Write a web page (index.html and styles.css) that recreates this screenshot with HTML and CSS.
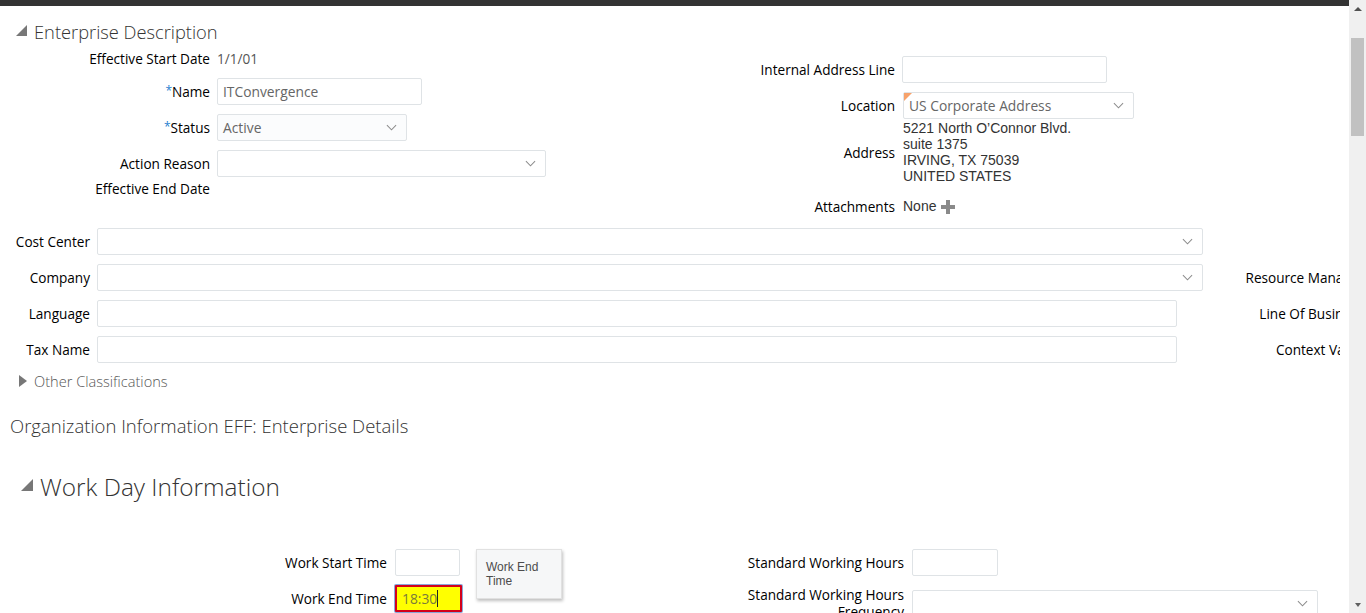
FILE: index.html
```html
<!DOCTYPE html>
<html>
<head>
<meta charset="utf-8">
<link rel="stylesheet" href="styles.css">
</head>
<body>
<div class="page">
  <div class="topbar"></div>
  <div class="content">
    <div class="sec-head">
      <span class="tri-down"></span><span class="sec-title">Enterprise Description</span>
    </div>
    <div class="top-cols">
      <div class="col-left">
        <div class="frow r-esd"><div class="lbl">Effective Start Date</div><div class="val">1/1/01</div></div>
        <div class="frow r-name"><div class="lbl"><span class="req">*</span>Name</div><div class="inp w-name"><span class="itext">ITConvergence</span></div></div>
        <div class="frow r-status"><div class="lbl"><span class="req">*</span>Status</div><div class="inp sel w-status shaded"><span class="itext">Active</span><svg class="chev" viewBox="0 0 12 7"><polyline points="1,1 6,6 11,1"/></svg></div></div>
        <div class="frow r-reason"><div class="lbl">Action Reason</div><div class="inp sel w-reason"><span class="itext"></span><svg class="chev" viewBox="0 0 12 7"><polyline points="1,1 6,6 11,1"/></svg></div></div>
        <div class="frow r-eed"><div class="lbl">Effective End Date</div></div>
      </div>
      <div class="col-right">
        <div class="frow r-ial"><div class="lbl">Internal Address Line</div><div class="inp w-ial"></div></div>
        <div class="frow r-loc"><div class="lbl">Location</div><div class="inp sel w-loc"><span class="flag"></span><span class="itext">US Corporate Address</span><svg class="chev" viewBox="0 0 12 7"><polyline points="1,1 6,6 11,1"/></svg></div></div>
        <div class="frow r-addr"><div class="lbl">Address</div>
          <div class="addr">5221 North O’Connor Blvd.<br>suite 1375<br>IRVING, TX 75039<br>UNITED STATES</div>
        </div>
        <div class="frow r-att"><div class="lbl">Attachments</div><div class="val dark">None</div>
          <svg class="plus" viewBox="0 0 14 14"><rect x="5" y="0" width="4" height="14"/><rect x="0" y="5" width="14" height="4"/></svg>
        </div>
      </div>
    </div>

    <div class="wide">
      <div class="wrow"><div class="lbl wl">Cost Center</div><div class="inp sel w-long"><span class="itext"></span><svg class="chev" viewBox="0 0 12 7"><polyline points="1,1 6,6 11,1"/></svg></div><div class="rside"><div class="rlbl"></div></div></div>
      <div class="wrow"><div class="lbl wl">Company</div><div class="inp sel w-long"><span class="itext"></span><svg class="chev" viewBox="0 0 12 7"><polyline points="1,1 6,6 11,1"/></svg></div><div class="rside"><div class="rlbl">Resource Manager</div></div></div>
      <div class="wrow"><div class="lbl wl">Language</div><div class="inp w-med"></div><div class="rside"><div class="rlbl">Line Of Business</div></div></div>
      <div class="wrow"><div class="lbl wl">Tax Name</div><div class="inp w-med"></div><div class="rside"><div class="rlbl">Context Value</div></div></div>
    </div>

    <div class="other"><span class="tri-right"></span><span class="other-t">Other Classifications</span></div>

    <div class="org-title">Organization Information EFF: Enterprise Details</div>

    <div class="wd-head"><span class="tri-down big"></span><span class="wd-title">Work Day Information</span></div>

    <div class="wd-cols">
      <div class="wd-left">
        <div class="frow r-wst"><div class="lbl">Work Start Time</div><div class="inp w-time"></div></div>
        <div class="frow r-wet"><div class="lbl">Work End Time</div><div class="inp w-time2 err"><span class="itext errt">18:30</span><span class="caret"></span></div></div>
      </div>
      <div class="tip-wrap">
        <div class="tip">Work End<br>Time</div>
      </div>
      <div class="wd-right">
        <div class="frow r-swh"><div class="lbl">Standard Working Hours</div><div class="inp w-swh"></div></div>
        <div class="frow r-swhf"><div class="lbl">Standard Working Hours<br>Frequency</div><div class="inp sel w-swhf"><span class="itext"></span><svg class="chev" viewBox="0 0 12 7"><polyline points="1,1 6,6 11,1"/></svg></div></div>
      </div>
    </div>
  </div>
</div>
<div class="sbar">
  <div class="sb-up"></div>
  <div class="sb-thumb"></div>
  <div class="sb-fill"></div>
  <div class="sb-down"></div>
</div>
</body>
</html>
```
FILE: styles.css
```css
html, body {
  margin: 0;
  padding: 0;
  height: 613px;
  overflow: hidden;
  background: #fff;
}
body {
  display: flex;
  font-family: "Open Sans", "Noto Sans", sans-serif;
  font-size: 13.6px;
  color: #000;
}
.page {
  width: 1349px;
  height: 613px;
  overflow: hidden;
  display: flex;
  flex-direction: column;
}
.topbar {
  height: 6px;
  background: #333;
  flex: none;
}
.content {
  width: 1340px;
  overflow: hidden;
}
.sec-head {
  height: 28px;
  padding-top: 11px;
  display: flex;
  align-items: center;
  padding-left: 16px;
}
.tri-down {
  width: 0;
  height: 0;
  border-left: 11px solid transparent;
  border-bottom: 11px solid #777;
  margin-right: 7px;
  margin-top: -2px;
}
.tri-down.big {
  border-left-width: 12px;
  border-bottom-width: 12px;
  margin-right: 7px;
}
.sec-title {
  font-family: "Open Sans", sans-serif;
  font-weight: 300;
  font-size: 18.3px;
  color: #333;
}
.top-cols {
  display: flex;
  margin-top: 1px;
}
.col-left {
  width: 740px;
  display: flex;
  flex-direction: column;
}
.col-right {
  display: flex;
  flex-direction: column;
}
.frow {
  display: flex;
  align-items: center;
}
.lbl {
  text-align: right;
  white-space: nowrap;
  flex: none;
}
.col-left .lbl { width: 210px; margin-right: 7px; }
.col-right .lbl { width: 155px; margin-right: 7px; }
.req { color: #1f7fcf; vertical-align: 2px; font-size: 12px; }
.val { color: #555; }
.val.dark { color: #333; font-family: "Liberation Sans", Arial, sans-serif; font-size: 14px; }
.r-esd { height: 24px; margin-top: 0; }
.r-name { height: 27px; margin-top: 8px; }
.r-status { height: 27px; margin-top: 9px; }
.r-reason { height: 27px; margin-top: 9px; }
.r-eed { height: 20px; margin-top: 1px; }

.r-ial { height: 27px; margin-top: 10px; }
.r-loc { height: 27px; margin-top: 9px; }
.r-loc .lbl { margin-right: 8px; }
.r-addr { height: 64px; margin-top: 1px; }
.r-addr .lbl { margin-right: 8px; }
.r-att { height: 20px; margin-top: 12px; }
.r-att .lbl { margin-right: 8px; }

.inp {
  box-sizing: border-box;
  height: 27px;
  border: 1px solid #dfe3e6;
  border-radius: 2px;
  background: #fff;
  display: flex;
  align-items: center;
  position: relative;
  flex: none;
}
.inp.shaded { background: #fbfcfd; }
.itext {
  padding-left: 5px;
  color: #666;
  font-size: 13.8px;
  flex: 1;
}
.sel .chev {
  width: 11px;
  height: 7px;
  margin-right: 9px;
  fill: none;
  stroke: #8c8c8c;
  stroke-width: 1.1;
}
.w-name { width: 205px; }
.w-status { width: 190px; }
.w-reason { width: 329px; }
.w-ial { width: 205px; }
.w-loc { width: 231px; }
.flag {
  position: absolute;
  left: 0;
  top: 0;
  width: 0;
  height: 0;
  border-top: 8px solid #f7a26b;
  border-right: 8px solid transparent;
}
.addr {
  font-family: "Liberation Sans", Arial, sans-serif;
  font-size: 14px;
  line-height: 16px;
  color: #333;
}
.plus {
  width: 14px;
  height: 14px;
  fill: #8a8a8a;
  margin-left: 5px;
  margin-top: 1px;
}

.wide {
  margin-top: 12px;
  display: flex;
  flex-direction: column;
  gap: 9px;
}
.wrow {
  display: flex;
  align-items: center;
  height: 27px;
}
.wl { width: 90px; margin-right: 7px; }
.w-long { width: 1106px; }
.w-med { width: 1080px; }
.rside {
  flex: 1;
  overflow: hidden;
  min-width: 0;
}
.rlbl {
  margin-right: -24px;
  text-align: right;
  white-space: nowrap;
}

.other {
  height: 20px;
  margin-top: 8px;
  display: flex;
  align-items: center;
  padding-left: 19px;
}
.tri-right {
  width: 0;
  height: 0;
  border-top: 6px solid transparent;
  border-bottom: 6px solid transparent;
  border-left: 8px solid #777;
  margin-right: 7px;
}
.other-t {
  font-weight: 300;
  font-size: 14.6px;
  color: #555;
}
.org-title {
  margin-top: 23px;
  padding-left: 10px;
  font-weight: 300;
  font-size: 18.5px;
  color: #333;
  height: 24px;
  line-height: 24px;
}
.wd-head {
  margin-top: 30px;
  height: 36px;
  display: flex;
  align-items: center;
  padding-left: 21px;
}
.wd-title {
  font-weight: 300;
  font-size: 24.4px;
  color: #333;
}
.wd-cols {
  margin-top: 45px;
  display: flex;
}
.wd-left {
  display: flex;
  flex-direction: column;
  gap: 9px;
  width: 476px;
}
.wd-left .lbl { width: 387px; margin-right: 8px; }
.r-wst, .r-wet { height: 27px; }
.w-time { width: 65px; }
.w-time2 { width: 67px; }
.err {
  background: #ffff00;
  border: 2px solid #d3001b;
  box-shadow: 0 0 0 1px #8aa6d8;
  border-radius: 1px;
}
.errt { color: #7a7a3c; padding-left: 5px; flex: none; }
.caret {
  width: 1px;
  height: 17px;
  background: #222;
  margin-left: 0;
}
.tip-wrap {
  width: 270px;
  flex: none;
}
.tip {
  box-sizing: border-box;
  width: 86px;
  height: 50px;
  background: #f6f7f8;
  border: 1px solid #e1e1e1;
  box-shadow: 1px 2px 3px rgba(0,0,0,0.25);
  font-family: "Liberation Sans", Arial, sans-serif;
  font-size: 12px;
  line-height: 14px;
  color: #4c4c4c;
  padding: 10px 0 0 9px;
}
.wd-right {
  display: flex;
  flex-direction: column;
  gap: 14px;
}
.wd-right .lbl { width: 158px; margin-right: 8px; line-height: 17px; }
.r-swh { height: 27px; }
.r-swhf { height: 27px; align-items: flex-start; }
.r-swhf .lbl { margin-top: -4px; }
.w-swh { width: 86px; }
.w-swhf { width: 406px; }

.sbar {
  width: 17px;
  height: 613px;
  background: #f0f0f0;
  display: flex;
  flex-direction: column;
  align-items: center;
  flex: none;
}
.sb-up {
  margin-top: 7px;
  width: 0;
  height: 0;
  border-left: 4px solid transparent;
  border-right: 4px solid transparent;
  border-bottom: 4px solid #505050;
}
.sb-thumb {
  margin-top: 27px;
  width: 13px;
  height: 98px;
  background: #c1c1c1;
}
.sb-fill { flex: 1; }
.sb-down {
  margin-bottom: 6px;
  width: 0;
  height: 0;
  border-left: 3px solid transparent;
  border-right: 3px solid transparent;
  border-top: 4px solid #606060;
}
```
